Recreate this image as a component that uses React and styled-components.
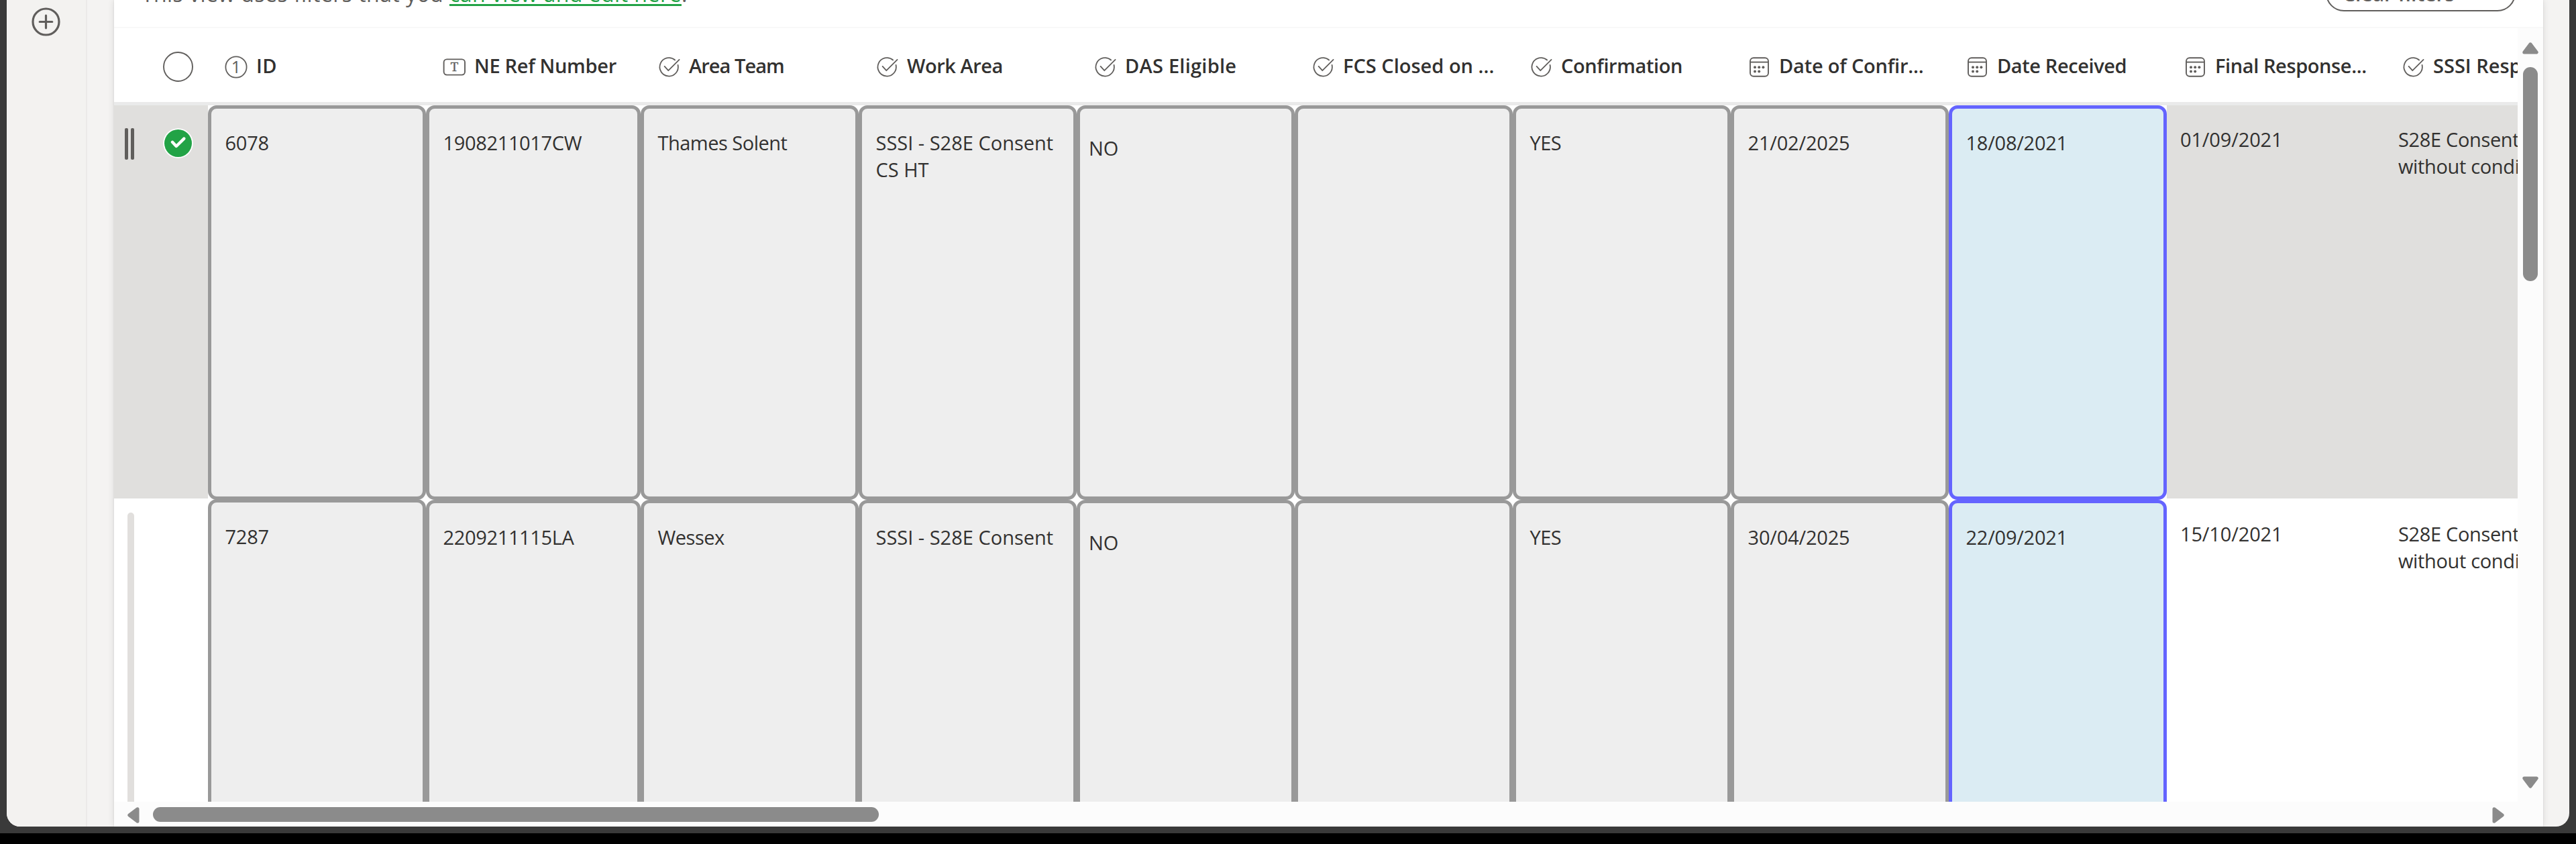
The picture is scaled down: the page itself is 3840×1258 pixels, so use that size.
import React from "react";
import styled, { createGlobalStyle } from "styled-components";

const GlobalStyle = createGlobalStyle`
  *, *::before, *::after { box-sizing: border-box; }
  body {
    margin: 0;
    background: #000;
    color: #323130;
    font-family: "Open Sans", "Noto Sans", sans-serif;
    font-size: 29px;
    line-height: 40px;
    overflow: hidden;
  }
  svg { display: block; flex: none; }
`;

const Frame = styled.div`
  width: 3840px;
  height: 1242px;
  padding: 0 10px 10px;
  background: #3a3a3a;
`;

const Window = styled.div`
  display: flex;
  height: 1232px;
  background: #f4f3f2;
  border-radius: 0 0 20px 20px;
  overflow: hidden;
`;

const Rail = styled.nav`
  width: 120px;
  flex: none;
  padding: 11px 0 0 37px;
  background: #f3f2f0;
  border-right: 2px solid #ebe9e8;
`;

const Panel = styled.main`
  display: flex;
  flex-direction: column;
  width: 3621px;
  margin-left: 40px;
  background: #fff;
  box-shadow: 0 0 10px rgba(0, 0, 0, 0.11), 0 0 2px rgba(0, 0, 0, 0.1);
`;

const FilterBar = styled.div`
  display: flex;
  justify-content: space-between;
  align-items: flex-start;
  height: 42px;
  flex: none;
  padding: 0 41px;
  border-bottom: 2px solid #f8f8f8;
`;

const FilterNote = styled.p`
  margin: -31px 0 0;
  color: #605e5c;
  font-size: 32px;
  line-height: 44px;
  letter-spacing: 0.43px;
  white-space: pre;
`;

const FilterLink = styled.a`
  color: #22a346;
  letter-spacing: 0.48px;
  text-decoration: underline;
  text-decoration-thickness: 3px;
  text-underline-offset: 3px;
  text-decoration-skip-ink: none;
`;

const ClearButton = styled.button`
  width: 283px;
  height: 54px;
  margin-top: -37px;
  padding: 0 0 0 23px;
  border: 2px solid #605e5c;
  border-radius: 27px;
  background: #fff;
  color: #605e5c;
  font: 600 30px/52px "Open Sans", "Noto Sans", sans-serif;
  text-align: left;
`;

const ListArea = styled.div`
  display: flex;
  height: 1153px;
  flex: none;
`;

const Table = styled.div`
  width: 3583px;
  height: 1153px;
  flex: none;
  overflow: hidden;
`;

const HeaderRow = styled.div`
  display: flex;
  width: max-content;
  height: 115px;
  border-bottom: 5px solid #eaeaea;
`;

const HeaderSelect = styled.div`
  width: 140px;
  padding: 35px 0 0 73px;
`;

const HeaderCell = styled.div`
  display: flex;
  align-items: center;
  gap: 9px;
  width: ${(p) => p.$width}px;
  padding: 5px 0 0 23px;
`;

const HeaderLabel = styled.span`
  margin-bottom: 3px;
  font-weight: 600;
  letter-spacing: ${(p) => p.$track}px;
  white-space: nowrap;
`;

const Row = styled.div`
  display: flex;
  width: max-content;
  height: 588px;
`;

const SelectCell = styled.div`
  display: flex;
  gap: ${(p) => (p.$selected ? "43px" : 0)};
  width: 140px;
  height: ${(p) => (p.$selected ? 586 : 588)}px;
  padding: ${(p) => (p.$selected ? "34px 0 0 16px" : "19px 0 0 20px")};
  background: ${(p) => (p.$selected ? "#e0dfdd" : "#fff")};
`;

const Grip = styled.div`
  display: flex;
  gap: 4px;
  width: 14px;
  height: 47px;

  &::before,
  &::after {
    content: "";
    width: 5px;
    border-radius: 2px;
    background: #605e5c;
  }
`;

const GroupBar = styled.div`
  width: 10px;
  height: 600px;
  border-radius: 5px;
  background: #e1dfdd;
`;

const Cell = styled.div`
  width: ${(p) => p.$width}px;
  height: ${(p) => (p.$lift ? 589 : 588)}px;
  margin-top: ${(p) => (p.$lift ? -1 : 0)}px;
  padding: ${(p) => (p.$tone === "inset" ? "39px 8px 0 13px" : "31px 8px 0 20.5px")};
  border: 5px solid ${(p) => (p.$tone === "active" ? "#6464ff" : "#999")};
  border-radius: 13px;
  background: ${(p) => (p.$tone === "active" ? "#dbecf3" : "#eee")};
  letter-spacing: ${(p) => p.$track}px;
  white-space: pre;
`;

const PlainCell = styled.div`
  width: ${(p) => p.$width}px;
  height: 586px;
  padding: 31px 0 0 20px;
  background: ${(p) => (p.$selected ? "#e0dfdd" : "#fff")};
  letter-spacing: ${(p) => p.$track}px;
  white-space: pre;
`;

const VerticalBar = styled.div`
  display: flex;
  flex-direction: column;
  align-items: center;
  width: 38px;
  padding: 21px 0 20px;
  background: #fcfcfc;
`;

const VerticalThumb = styled.div`
  width: 22px;
  height: 319px;
  margin: 19px 0 auto;
  border-radius: 11px;
  background: #8b8b8b;
`;

const HorizontalBar = styled.div`
  display: flex;
  align-items: flex-start;
  height: 37px;
  padding: 8px 58px 0 20px;
  background: #fcfcfc;
`;

const HorizontalThumb = styled.div`
  width: 1082px;
  height: 22px;
  margin: 0 auto 0 20px;
  border-radius: 11px;
  background: #8b8b8b;
`;

const AddIcon = () => (
  <svg width="43" height="43" viewBox="0 0 43 43" fill="none" stroke="#605e5c" strokeWidth="3.2" strokeLinecap="round">
    <circle cx="21.5" cy="21.5" r="19.5" />
    <path d="M21.5 12.2v18.6M12.2 21.5h18.6" />
  </svg>
);

const EmptyCircle = () => (
  <svg width="45" height="45" viewBox="0 0 45 45" fill="none" stroke="#605e5c" strokeWidth="1.9">
    <circle cx="22.5" cy="22.5" r="21.5" />
  </svg>
);

const SelectedCircle = () => (
  <svg width="45" height="45" viewBox="0 0 45 45" fill="none">
    <circle cx="22.5" cy="22.5" r="22.3" fill="#fff" />
    <circle cx="22.5" cy="22.5" r="20.5" fill="#22a346" />
    <path d="M14 20.8l5.8 6.2L31.3 15.6" stroke="#fff" strokeWidth="4.4" strokeLinecap="round" strokeLinejoin="round" />
  </svg>
);

const NumberIcon = () => (
  <svg width="40" height="40" viewBox="0 0 40 40">
    <circle cx="19" cy="20" r="15.6" fill="none" stroke="#605e5c" strokeWidth="1.8" />
    <text x="19" y="28.8" textAnchor="middle" fontFamily="Open Sans, sans-serif" fontSize="25" fill="#605e5c">1</text>
  </svg>
);

const TextIcon = () => (
  <svg width="40" height="40" viewBox="0 0 40 40">
    <rect x="3.6" y="8.4" width="31.4" height="23.2" rx="4.5" fill="none" stroke="#605e5c" strokeWidth="1.9" />
    <text x="19.3" y="26" textAnchor="middle" fontFamily="Liberation Serif, serif" fontSize="18.5" fill="#605e5c" stroke="#605e5c" strokeWidth="0.5">T</text>
  </svg>
);

const ChoiceIcon = () => (
  <svg width="40" height="40" viewBox="0 0 40 40" fill="none" stroke="#605e5c" strokeWidth="1.8" strokeLinecap="round" strokeLinejoin="round">
    <path d="M32.6 17A13.7 13.7 0 1 1 28.2 9.5" />
    <path d="M12.6 18.9l5.7 6.3L34.6 8.9" />
  </svg>
);

const CalendarIcon = () => (
  <svg width="40" height="40" viewBox="0 0 40 40" fill="none" stroke="#605e5c" strokeWidth="1.9">
    <rect x="6" y="6.3" width="27" height="27.4" rx="5" />
    <path d="M6 12.6h27" />
    <g fill="#605e5c" stroke="none">
      <circle cx="13" cy="20.2" r="2" />
      <circle cx="19.2" cy="20.2" r="2" />
      <circle cx="25.4" cy="20.2" r="2" />
      <circle cx="13" cy="26.4" r="2" />
      <circle cx="19.2" cy="26.4" r="2" />
    </g>
  </svg>
);

const ArrowUp = () => (
  <svg width="24" height="18" viewBox="0 0 24 18" fill="#8b8b8b" stroke="#8b8b8b" strokeWidth="5" strokeLinejoin="round">
    <path d="M12 2.8L21.2 15H2.8z" />
  </svg>
);

const ArrowDown = () => (
  <svg width="24" height="18" viewBox="0 0 24 18" fill="#8b8b8b" stroke="#8b8b8b" strokeWidth="5" strokeLinejoin="round">
    <path d="M12 15.2L21.2 3H2.8z" />
  </svg>
);

const ArrowLeft = () => (
  <svg width="18" height="24" viewBox="0 0 18 24" fill="#8b8b8b" stroke="#8b8b8b" strokeWidth="5" strokeLinejoin="round">
    <path d="M2.8 12L15 2.8v18.4z" />
  </svg>
);

const ArrowRight = () => (
  <svg width="18" height="24" viewBox="0 0 18 24" fill="#8b8b8b" stroke="#8b8b8b" strokeWidth="5" strokeLinejoin="round">
    <path d="M15.2 12L3 2.8v18.4z" />
  </svg>
);

const columns = [
  { label: "ID", Icon: NumberIcon, width: 325, track: 0.5, valueTrack: -0.25 },
  { label: "NE Ref Number", Icon: TextIcon, width: 320, track: -0.3, valueTrack: -0.35 },
  { label: "Area Team", Icon: ChoiceIcon, width: 325, track: -0.95, valueTrack: -0.5 },
  { label: "Work Area", Icon: ChoiceIcon, width: 325, track: -0.45, valueTrack: 0 },
  { label: "DAS Eligible", Icon: ChoiceIcon, width: 325, track: 0.25, valueTrack: 0 },
  { label: "FCS Closed on ...", Icon: ChoiceIcon, width: 325, track: 0, valueTrack: 0 },
  { label: "Confirmation", Icon: ChoiceIcon, width: 325, track: -0.4, valueTrack: -0.5 },
  { label: "Date of Confir...", Icon: CalendarIcon, width: 325, track: -0.2, valueTrack: -0.2 },
  { label: "Date Received", Icon: CalendarIcon, width: 325, track: -0.4, valueTrack: -0.25 },
  { label: "Final Response...", Icon: CalendarIcon, width: 325, track: -0.4, valueTrack: -0.15 },
  { label: "SSSI Response", Icon: ChoiceIcon, width: 325, track: 0, valueTrack: -0.35 },
];

const rows = [
  {
    selected: true,
    values: ["6078", "1908211017CW", "Thames Solent", "SSSI - S28E Consent\nCS HT", "NO", "", "YES", "21/02/2025", "18/08/2021", "01/09/2021", "S28E Consent\nwithout conditions"],
  },
  {
    selected: false,
    values: ["7287", "2209211115LA", "Wessex", "SSSI - S28E Consent", "NO", "", "YES", "30/04/2025", "22/09/2021", "15/10/2021", "S28E Consent\nwithout conditions"],
  },
];

const toneOf = (index) => (index === 8 ? "active" : index === 4 ? "inset" : "normal");

const ItemRow = ({ selected, values }) => (
  <Row>
    <SelectCell $selected={selected}>
      {selected ? (
        <>
          <Grip />
          <SelectedCircle />
        </>
      ) : (
        <GroupBar />
      )}
    </SelectCell>
    {values.map((value, i) =>
      i < 9 ? (
        <Cell key={i} $width={columns[i].width} $tone={toneOf(i)} $track={columns[i].valueTrack} $lift={!selected && i === 0}>
          {value}
        </Cell>
      ) : (
        <PlainCell key={i} $width={columns[i].width} $selected={selected} $track={columns[i].valueTrack}>
          {value}
        </PlainCell>
      )
    )}
  </Row>
);

export default function App() {
  return (
    <>
      <GlobalStyle />
      <Frame>
        <Window>
          <Rail>
            <AddIcon />
          </Rail>
          <Panel>
            <FilterBar>
              <FilterNote>
                {"This view uses filters that you "}
                <FilterLink>can view and edit here</FilterLink>.
              </FilterNote>
              <ClearButton>Clear filters</ClearButton>
            </FilterBar>
            <ListArea>
              <Table>
                <HeaderRow>
                  <HeaderSelect>
                    <EmptyCircle />
                  </HeaderSelect>
                  {columns.map(({ label, Icon, width, track }) => (
                    <HeaderCell key={label} $width={width}>
                      <Icon />
                      <HeaderLabel $track={track}>{label}</HeaderLabel>
                    </HeaderCell>
                  ))}
                </HeaderRow>
                {rows.map((row) => (
                  <ItemRow key={row.values[0]} {...row} />
                ))}
              </Table>
              <VerticalBar>
                <ArrowUp />
                <VerticalThumb />
                <ArrowDown />
              </VerticalBar>
            </ListArea>
            <HorizontalBar>
              <ArrowLeft />
              <HorizontalThumb />
              <ArrowRight />
            </HorizontalBar>
          </Panel>
        </Window>
      </Frame>
    </>
  );
}
